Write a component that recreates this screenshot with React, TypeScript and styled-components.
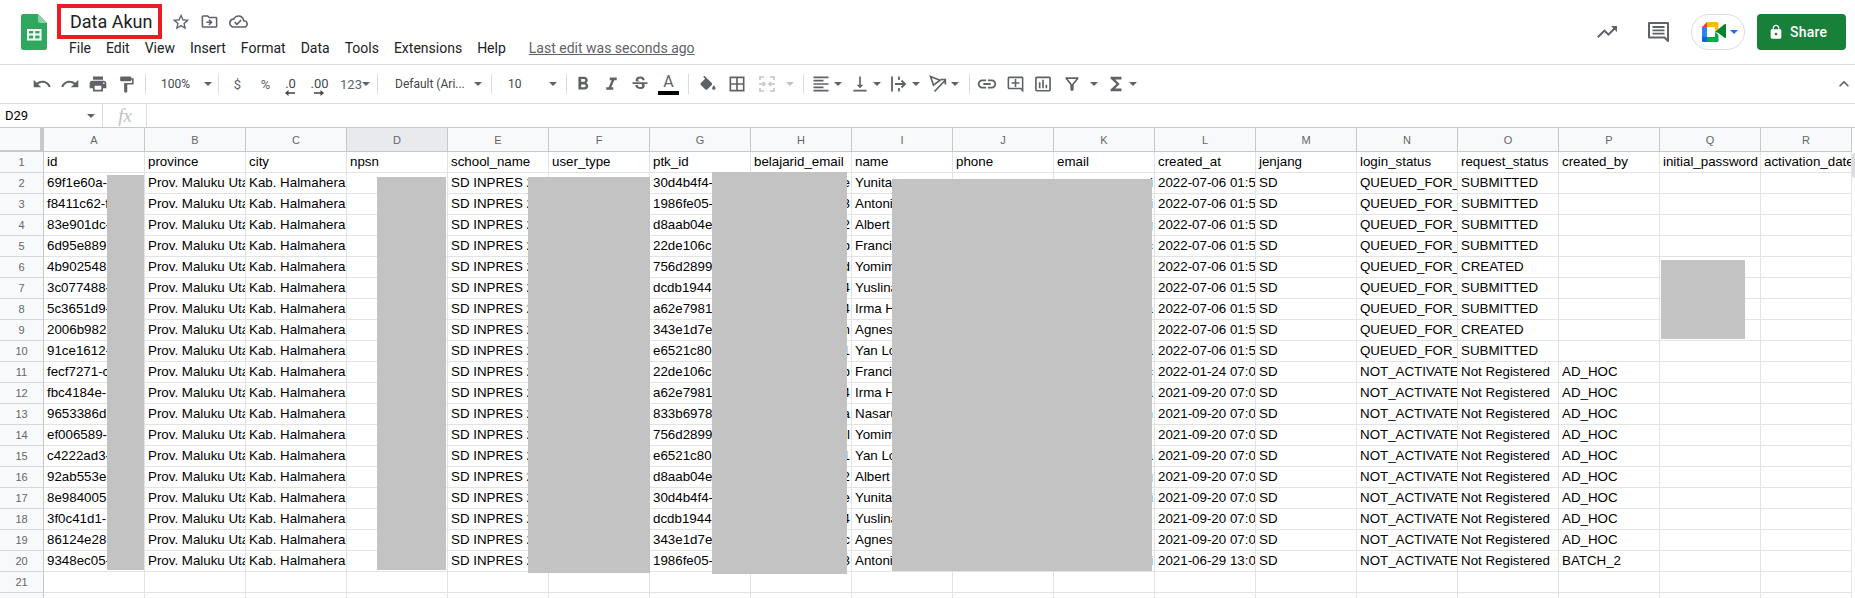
import type { ReactNode } from "react";
import styled, { createGlobalStyle } from "styled-components";
import {
  MdBorderAll,
  MdExpandLess,
  MdFormatAlignLeft,
  MdFormatBold,
  MdFormatItalic,
  MdFormatPaint,
  MdFunctions,
  MdInsertChartOutlined,
  MdLink,
  MdLock,
  MdOutlineAddComment,
  MdOutlineCloudDone,
  MdOutlineDriveFileMove,
  MdOutlineFilterAlt,
  MdPrint,
  MdRedo,
  MdStarBorder,
  MdStrikethroughS,
  MdTrendingUp,
  MdUndo,
  MdVerticalAlignBottom,
} from "react-icons/md";

const UI_FONT = `Roboto, "Liberation Sans", Arial, sans-serif`;
const CELL_FONT = `"Liberation Sans", Arial, sans-serif`;

const COLUMNS = "ABCDEFGHIJKLMNOPQR".split("");
const HEADERS = [
  "id", "province", "city", "npsn", "school_name", "user_type", "ptk_id", "belajarid_email", "name",
  "phone", "email", "created_at", "jenjang", "login_status", "request_status", "created_by",
  "initial_password", "activation_date",
];
const IDS = [
  "69f1e60a-", "f8411c62-f", "83e901dc-", "6d95e889", "4b902548", "3c077488-", "5c3651d9-", "2006b982",
  "91ce1612-", "fecf7271-c", "fbc4184e-", "9653386d", "ef006589-", "c4222ad3-", "92ab553e", "8e984005",
  "3f0c41d1-", "86124e28", "9348ec05-",
];
const PTK_IDS = [
  "30d4b4f4-", "1986fe05-", "d8aab04e", "22de106c", "756d2899", "dcdb1944", "a62e7981", "343e1d7e",
  "e6521c80", "22de106c", "a62e7981", "833b6978", "756d2899", "e6521c80", "d8aab04e", "30d4b4f4-",
  "dcdb1944", "343e1d7e", "1986fe05-",
];
const NAMES = [
  "Yunita", "Antoni", "Albert", "Franci", "Yomim", "Yuslina", "Irma H", "Agnes", "Yan Lo", "Franci",
  "Irma H", "Nasaru", "Yomim", "Yan Lo", "Albert", "Yunita", "Yuslina", "Agnes", "Antoni",
];
const BELAJAR_TAILS = "e32bd44n1b4al12e4c3".split("");
const EMAIL_TAILS = ["i", "i", "g", "c", "", ".", "a", "", "a", "c", "a", "n", "", "a", "g", "i", ".", "", "i"];

const createdAt = (i: number) => {
  if (i < 9) return "2022-07-06 01:5";
  if (i === 9) return "2022-01-24 07:0";
  if (i === 18) return "2021-06-29 13:0";
  return "2021-09-20 07:0";
};

const buildRow = (i: number) => [
  IDS[i],
  "Prov. Maluku Utara",
  "Kab. Halmahera Utara",
  "",
  "SD INPRES 2",
  "",
  PTK_IDS[i],
  BELAJAR_TAILS[i],
  NAMES[i],
  "",
  EMAIL_TAILS[i],
  createdAt(i),
  "SD",
  i < 9 ? "QUEUED_FOR_ACTIVATION" : "NOT_ACTIVATED",
  i < 9 ? (i === 4 || i === 7 ? "CREATED" : "SUBMITTED") : "Not Registered",
  i < 9 ? "" : i === 18 ? "BATCH_2" : "AD_HOC",
  "",
  "",
];

const ROWS = [HEADERS, ...IDS.map((_, i) => buildRow(i)), Array(18).fill(""), Array(18).fill("")];

const SheetsLogo = () => (
  <svg width="26" height="36" viewBox="0 0 26 36">
    <path d="M2.5 0H17l9 9v24.500a2.500 2.500 0 0 1-2.500 2.500h-21A2.500 2.500 0 0 1 0 33.500v-31A2.500 2.500 0 0 1 2.500 0z" fill="#2fa85f" />
    <path d="M17 0l9 9h-6.500A2.500 2.500 0 0 1 17 6.500z" fill="#8ed1a8" />
    <path d="M6 15h14.500v11.500H6zm2 2v2.600h4.200V17zm6.200 0v2.600h4.300V17zM8 21.500v3h4.200v-3zm6.200 0v3h4.300v-3z" fill="#fff" fillRule="evenodd" />
  </svg>
);

const MeetLogo = () => (
  <svg width="24" height="20" viewBox="0 0 24 20">
    <path d="M5 0v5H0z" fill="#ea4335" />
    <path d="M5 0h10a1.500 1.500 0 0 1 1.500 1.500V7L13 10V5H5z" fill="#fbbc04" />
    <path d="M0 5h5v10H0z" fill="#2684fc" />
    <path d="M0 15h5v5H1.500A1.500 1.500 0 0 1 0 18.500z" fill="#0066da" />
    <path d="M5 15h8v-5l3.500 3v5.500A1.500 1.500 0 0 1 15 20H5z" fill="#00ac47" />
    <path d="M13 10l3.500-3 6-4.800c.7-.5 1.500 0 1.500.8v12c0 .8-.8 1.300-1.500.8l-6-4.800z" fill="#00832d" />
  </svg>
);

const CommentIcon = () => (
  <svg width="21" height="20" viewBox="0 0 21 20" fill="none">
    <path d="M1 1h19v18l-3.500-3.500H1z" stroke="#5f6368" strokeWidth="2" strokeLinejoin="round" />
    <path d="M4.500 5h12M4.500 8.300h12M4.500 11.600h12" stroke="#5f6368" strokeWidth="1.800" />
  </svg>
);

const FillIcon = () => (
  <svg width="20" height="20" viewBox="0 -2 24 24" fill="#5f6368">
    <path d="M16.560 8.940L7.620 0 6.210 1.410l2.380 2.380-5.150 5.150c-.59.59-.59 1.540 0 2.120l5.500 5.500c.29.29.68.44 1.060.44s.77-.15 1.060-.44l5.500-5.500c.59-.58.59-1.530 0-2.120zM19 11.500s-2 2.170-2 3.500c0 1.100.9 2 2 2s2-.9 2-2c0-1.330-2-3.500-2-3.500z" />
  </svg>
);

const MergeIcon = () => (
  <svg width="18" height="18" viewBox="0 0 18 18" fill="none" stroke="#c4c4c4" strokeWidth="1.600">
    <path d="M2 5V2h4M12 2h4v3M2 13v3h4M12 16h4v-3M1 9h5M17 9h-5" />
    <path d="M5 7l2 2-2 2M13 7l-2 2 2 2" />
  </svg>
);

const WrapIcon = () => (
  <svg width="18" height="18" viewBox="0 0 18 18" fill="none" stroke="#5f6368" strokeWidth="1.800">
    <path d="M2 1.500v15M9 1.500v3.500M9 13v3.500M5 9h9" />
    <path d="M11.500 5.500L15 9l-3.500 3.500" />
  </svg>
);

const RotateIcon = () => (
  <svg width="18" height="18" viewBox="0 0 18 18" fill="none" stroke="#5f6368" strokeWidth="1.700">
    <path d="M1.500 1.500l9.500 3.700-6.500 5z" />
    <path d="M5.500 16.500L16 5.500M11.500 4.500H16.300V9.500" />
  </svg>
);

const ArrowMark = ({ flip }: { flip?: boolean }) => (
  <svg width="10" height="6" viewBox="0 0 10 6" fill="#444">
    {flip ? <path d="M0 2.200h6.500V0L10 3 6.500 6V3.800H0z" /> : <path d="M10 2.200H3.500V0L0 3l3.500 3V3.800H10z" />}
  </svg>
);

const GlobalStyle = createGlobalStyle`
  html, body {
    margin: 0;
    padding: 0;
    background: #fff;
  }
`;

const Page = styled.div`
  display: flex;
  flex-direction: column;
  width: 1855px;
  height: 598px;
  overflow: hidden;
  background: #fff;
  font-family: ${UI_FONT};
`;

const Header = styled.header`
  display: flex;
  align-items: flex-start;
  flex: none;
  height: 65px;
  box-sizing: border-box;
  padding: 0 9px 0 21px;
  border-bottom: 1px solid #dadce0;
`;

const LogoSlot = styled.div`
  display: flex;
  margin: 14px 10px 0 0;
`;

const TitleColumn = styled.div`
  display: flex;
  flex-direction: column;
  margin-top: 4px;
`;

const TitleRow = styled.div`
  display: flex;
  align-items: center;
`;

const TitleBox = styled.div`
  display: flex;
  align-items: center;
  width: 105px;
  height: 35px;
  box-sizing: border-box;
  padding-left: 9px;
  border: 4px solid #ed1c24;
  font-size: 18px;
  color: #202124;
  white-space: nowrap;
`;

const TitleIcons = styled.div`
  display: flex;
  margin-left: 4px;
  color: #5f6368;
`;

const TitleIcon = styled.span`
  display: flex;
  justify-content: center;
  width: 29px;
`;

const MenuRow = styled.nav`
  display: flex;
  align-items: center;
  gap: 15px;
  height: 18px;
  margin-left: 12px;
  font-size: 14px;
  line-height: 18px;
  color: #202124;
  white-space: nowrap;
`;

const LastEdit = styled.span`
  margin-left: 8px;
  color: #5f6368;
  text-decoration: underline;
`;

const RightGroup = styled.div`
  display: flex;
  align-items: center;
  height: 64px;
  margin-left: auto;
`;

const HeaderIcon = styled.span`
  display: flex;
  justify-content: center;
  width: 24px;
  margin-right: ${(p: { $after: number }) => p.$after}px;
  color: #5f6368;
`;

const MeetPill = styled.div`
  display: flex;
  align-items: center;
  gap: 4px;
  width: 54px;
  height: 36px;
  box-sizing: border-box;
  padding-left: 10px;
  margin-right: 12px;
  border: 1px solid #dadce0;
  border-radius: 18px;
`;

const ShareButton = styled.div`
  display: flex;
  align-items: center;
  gap: 6px;
  width: 89px;
  height: 36px;
  box-sizing: border-box;
  padding-left: 11px;
  border-radius: 4px;
  background: #188038;
  color: #fff;
  font-size: 14px;
  font-weight: 500;
  letter-spacing: 0.25px;
`;

const Toolbar = styled.div`
  display: flex;
  align-items: center;
  flex: none;
  height: 39px;
  box-sizing: border-box;
  padding: 0 1px 0 28px;
  border-bottom: 1px solid #dadce0;
  color: #5f6368;
`;

const ToolButton = styled.div<{ $w: number; $before?: number }>`
  display: flex;
  align-items: center;
  justify-content: center;
  flex: none;
  width: ${(p) => p.$w}px;
  margin-left: ${(p) => p.$before ?? 0}px;
  font-size: 13px;
  color: #5f6368;
`;

const ToolDivider = styled.span<{ $before: number; $after: number }>`
  flex: none;
  width: 1px;
  height: 20px;
  margin: 0 ${(p) => p.$after}px 0 ${(p) => p.$before}px;
  background: #dadce0;
`;

const Caret = styled.span<{ $color?: string }>`
  flex: none;
  width: 0;
  height: 0;
  border-left: 4px solid transparent;
  border-right: 4px solid transparent;
  border-top: 4px solid ${(p) => p.$color ?? "#5f6368"};
`;

const SelectBox = styled.div<{ $w: number; $left: number }>`
  display: flex;
  align-items: center;
  justify-content: space-between;
  flex: none;
  width: ${(p) => p.$w}px;
  box-sizing: border-box;
  padding: 0 5px 0 ${(p) => p.$left}px;
  font-size: 12px;
  color: #444746;
  white-space: nowrap;
`;

const DecimalStack = styled.div`
  display: flex;
  flex-direction: column;
  align-items: center;
  font-size: 13px;
  line-height: 13px;
  color: #444746;
  margin-top: 4px;
`;

const ColorLetter = styled.div`
  display: flex;
  flex-direction: column;
  align-items: center;
  font-size: 16px;
  line-height: 17px;
  color: #5f6368;
`;

const ColorBar = styled.span`
  width: 21px;
  height: 4px;
  margin-top: 1px;
  background: #000;
`;

const CollapseSlot = styled.div`
  display: flex;
  margin-left: auto;
  color: #5f6368;
`;

const FormulaBar = styled.div`
  display: flex;
  flex: none;
  height: 24px;
  box-sizing: border-box;
  border-bottom: 1px solid #c7c8ca;
`;

const NameBox = styled.div`
  display: flex;
  align-items: center;
  justify-content: space-between;
  width: 103px;
  box-sizing: border-box;
  padding: 0 7px 0 5px;
  border-right: 1px solid #dadce0;
  font-size: 13px;
  color: #000;
`;

const FxBox = styled.div`
  display: flex;
  align-items: center;
  justify-content: center;
  width: 44px;
  box-sizing: border-box;
  padding-left: 1px;
  border-right: 1px solid #dadce0;
  font-family: "Liberation Serif", serif;
  font-style: italic;
  font-size: 19px;
  color: #bdc1c6;
`;

const SheetArea = styled.div`
  display: flex;
  flex: 1;
  min-height: 0;
`;

const GridArea = styled.div`
  position: relative;
  flex: none;
  width: 1852px;
`;

const Grid = styled.div`
  display: grid;
  grid-template-columns: 44px repeat(17, 101px) 91px;
  grid-template-rows: 24px repeat(22, 21px);
`;

const Corner = styled.div`
  box-sizing: border-box;
  background: #f8f9fa;
  border-right: 4px solid #c7c8ca;
  border-bottom: 2px solid #c7c8ca;
`;

const ColumnHead = styled.div<{ $active?: boolean }>`
  display: flex;
  align-items: center;
  justify-content: center;
  box-sizing: border-box;
  background: ${(p) => (p.$active ? "#e8eaed" : "#f8f9fa")};
  border-right: 1px solid #c7c8ca;
  border-bottom: 1px solid #c7c8ca;
  font-family: ${CELL_FONT};
  font-size: 11px;
  color: #666;
`;

const RowHead = styled.div`
  display: flex;
  align-items: center;
  justify-content: center;
  box-sizing: border-box;
  background: #f8f9fa;
  border-right: 1px solid #c7c8ca;
  border-bottom: 1px solid #d5d6d7;
  font-family: ${CELL_FONT};
  font-size: 11px;
  color: #666;
`;

const Cell = styled.div<{ $tail?: boolean }>`
  box-sizing: border-box;
  overflow: hidden;
  padding: 0 ${(p) => (p.$tail ? "1px" : "0")} 0 3px;
  border-right: 1px solid #e2e3e3;
  border-bottom: 1px solid #e2e3e3;
  font-family: ${CELL_FONT};
  font-size: 13.330px;
  line-height: 20px;
  color: #000;
  white-space: nowrap;
  text-align: ${(p) => (p.$tail ? "right" : "left")};
`;

const Redaction = styled.div<{ $x: number; $y: number; $w: number; $h: number }>`
  position: absolute;
  left: ${(p) => p.$x}px;
  top: ${(p) => p.$y}px;
  width: ${(p) => p.$w}px;
  height: ${(p) => p.$h}px;
  background: #c3c3c3;
`;

const ScrollLane = styled.div`
  flex: 1;
  background: #fff;
`;

const ScrollThumb = styled.div`
  height: 25px;
  margin-top: 25px;
  border-radius: 3px 0 0 3px;
  background: #dadce0;
`;

const MENU = ["File", "Edit", "View", "Insert", "Format", "Data", "Tools", "Extensions", "Help"];

// page coordinates of the grey boxes, offset by the grid's top at 128
const REDACTIONS = [
  { x: 107, y: 175, w: 37, h: 395 },
  { x: 377, y: 177, w: 69, h: 393 },
  { x: 528, y: 177, w: 122, h: 396 },
  { x: 712, y: 172, w: 135, h: 402 },
  { x: 892, y: 179, w: 260, h: 392 },
  { x: 1661, y: 260, w: 84, h: 79 },
];

const Tool = ({ w, before, children }: { w: number; before?: number; children: ReactNode }) => (
  <ToolButton $w={w} $before={before}>
    {children}
  </ToolButton>
);

export default function App() {
  return (
    <Page>
      <GlobalStyle />
      <Header>
        <LogoSlot>
          <SheetsLogo />
        </LogoSlot>
        <TitleColumn>
          <TitleRow>
            <TitleBox>Data Akun</TitleBox>
            <TitleIcons>
              <TitleIcon>
                <MdStarBorder size={20} />
              </TitleIcon>
              <TitleIcon>
                <MdOutlineDriveFileMove size={19} />
              </TitleIcon>
              <TitleIcon>
                <MdOutlineCloudDone size={19} />
              </TitleIcon>
            </TitleIcons>
          </TitleRow>
          <MenuRow>
            {MENU.map((item) => (
              <span key={item}>{item}</span>
            ))}
            <LastEdit>Last edit was seconds ago</LastEdit>
          </MenuRow>
        </TitleColumn>
        <RightGroup>
          <HeaderIcon $after={27}>
            <MdTrendingUp size={24} />
          </HeaderIcon>
          <HeaderIcon $after={21}>
            <CommentIcon />
          </HeaderIcon>
          <MeetPill>
            <MeetLogo />
            <Caret $color="#1a73e8" />
          </MeetPill>
          <ShareButton>
            <MdLock size={16} />
            Share
          </ShareButton>
        </RightGroup>
      </Header>

      <Toolbar>
        <Tool w={28}><MdUndo size={20} /></Tool>
        <Tool w={28}><MdRedo size={20} /></Tool>
        <Tool w={28}><MdPrint size={20} /></Tool>
        <Tool w={29}><MdFormatPaint size={19} /></Tool>
        <ToolDivider $before={4} $after={5} />
        <SelectBox $w={66} $left={10}>100%<Caret /></SelectBox>
        <ToolDivider $before={1} $after={5} />
        <Tool w={27}>$</Tool>
        <Tool w={29}>%</Tool>
        <Tool w={21}><DecimalStack>.0<ArrowMark /></DecimalStack></Tool>
        <Tool w={37}><DecimalStack>.00<ArrowMark flip /></DecimalStack></Tool>
        <Tool w={34}>123<Caret /></Tool>
        <ToolDivider $before={5} $after={5} />
        <SelectBox $w={104} $left={12}>Default (Ari...<Caret /></SelectBox>
        <ToolDivider $before={4} $after={5} />
        <SelectBox $w={65} $left={11}>10<Caret /></SelectBox>
        <ToolDivider $before={4} $after={2} />
        <Tool w={28}><MdFormatBold size={22} /></Tool>
        <Tool w={29}><MdFormatItalic size={21} /></Tool>
        <Tool w={28}><MdStrikethroughS size={20} /></Tool>
        <Tool w={29}><ColorLetter>A<ColorBar /></ColorLetter></Tool>
        <ToolDivider $before={5} $after={5} />
        <Tool w={28}><FillIcon /></Tool>
        <Tool w={30}><MdBorderAll size={20} /></Tool>
        <Tool w={30}><MergeIcon /></Tool>
        <Tool w={16}><Caret $color="#c4c4c4" /></Tool>
        <ToolDivider $before={5} $after={5} />
        <Tool w={24}><MdFormatAlignLeft size={20} /></Tool>
        <Tool w={10}><Caret /></Tool>
        <Tool w={24} before={5}><MdVerticalAlignBottom size={20} /></Tool>
        <Tool w={10}><Caret /></Tool>
        <Tool w={24} before={5}><WrapIcon /></Tool>
        <Tool w={10}><Caret /></Tool>
        <Tool w={24} before={5}><RotateIcon /></Tool>
        <Tool w={10}><Caret /></Tool>
        <ToolDivider $before={9} $after={3} />
        <Tool w={28}><MdLink size={22} /></Tool>
        <Tool w={28}><MdOutlineAddComment size={19} /></Tool>
        <Tool w={28}><MdInsertChartOutlined size={20} /></Tool>
        <Tool w={30}><MdOutlineFilterAlt size={20} /></Tool>
        <Tool w={14}><Caret /></Tool>
        <Tool w={24} before={3}><MdFunctions size={22} /></Tool>
        <Tool w={10}><Caret /></Tool>
        <CollapseSlot>
          <MdExpandLess size={20} />
        </CollapseSlot>
      </Toolbar>

      <FormulaBar>
        <NameBox>D29<Caret /></NameBox>
        <FxBox>fx</FxBox>
      </FormulaBar>

      <SheetArea>
        <GridArea>
          <Grid>
            <Corner />
            {COLUMNS.map((c) => (
              <ColumnHead key={c} $active={c === "D"}>
                {c}
              </ColumnHead>
            ))}
            {ROWS.map((row, r) => [
              <RowHead key={`head-${r}`}>{r + 1}</RowHead>,
              ...row.map((value, c) => (
                <Cell key={`${r}-${c}`} $tail={r > 0 && r < 20 && (c === 7 || c === 10)}>
                  {value}
                </Cell>
              )),
            ])}
          </Grid>
          {REDACTIONS.map((box) => (
            <Redaction key={box.x} $x={box.x} $y={box.y - 128} $w={box.w} $h={box.h} />
          ))}
        </GridArea>
        <ScrollLane>
          <ScrollThumb />
        </ScrollLane>
      </SheetArea>
    </Page>
  );
}
